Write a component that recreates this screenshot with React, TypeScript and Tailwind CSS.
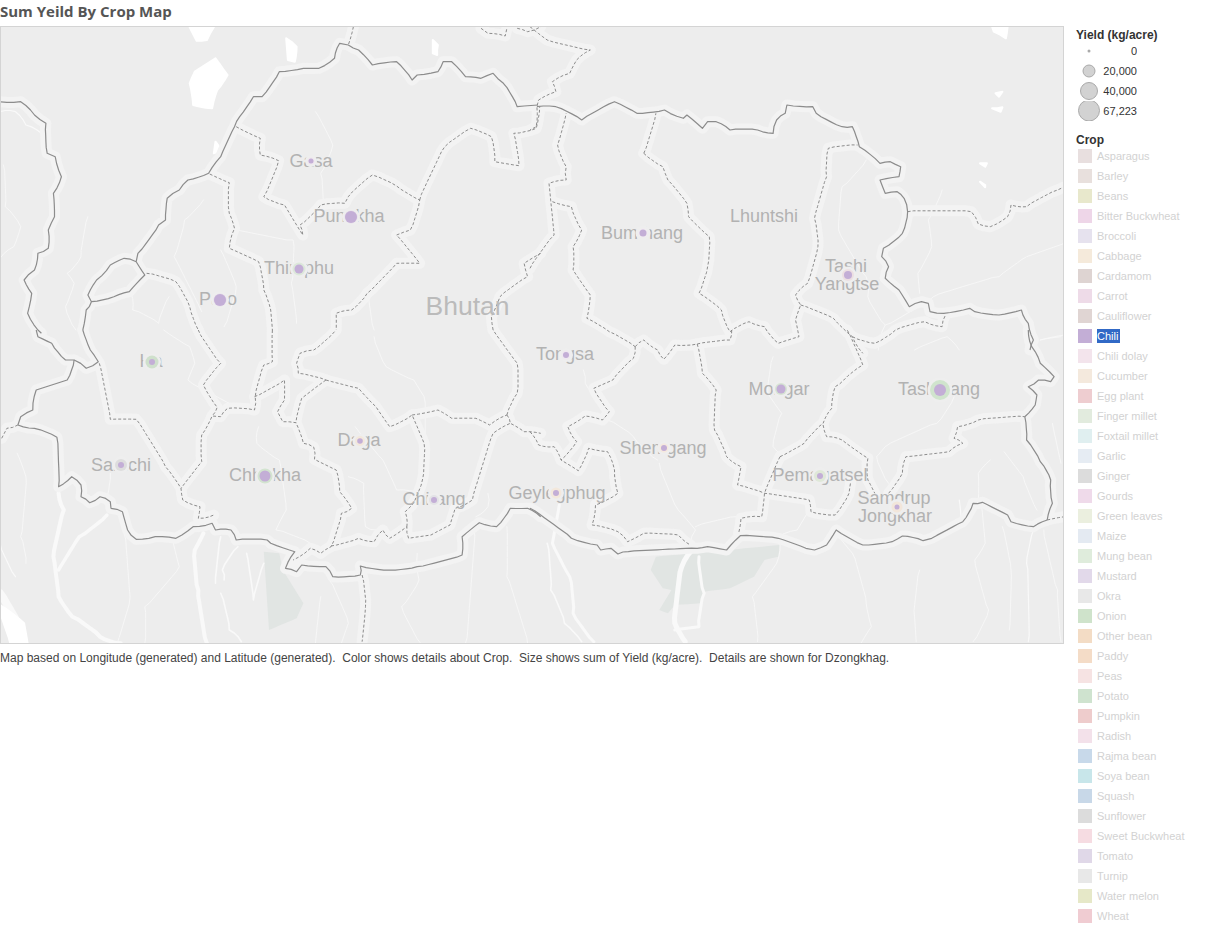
import React from "react";

// traced from crops of the map, each crop has its own origin and scale
type Region = "A" | "B" | "C" | "D";
const origins: Record<Region, [number, number]> = {A: [0, 0], B: [530, 20], C: [0, 330], D: [530, 330]};

// splits long segments and nudges the new points so lines look hand surveyed, not ruler straight
const toPath = ([region, pts]: [Region, string], rough = 0.9) => {
    const [ox, oy] = origins[region];
    const points = pts.trim().split(/\s+/).map((p) => {
        const [x, y] = p.split(",").map(Number);
        return [ox + x / 2.9, oy + y / 3];
    });
    const out: number[][] = [points[0]];
    for (let i = 1; i < points.length; i++) {
        const [ax, ay] = points[i - 1];
        const [bx, by] = points[i];
        const len = Math.hypot(bx - ax, by - ay);
        const steps = Math.max(1, Math.round(len / 6));
        for (let s = 1; s <= steps; s++) {
            const t = s / steps;
            const n = s === steps ? 0 : Math.sin(ax * 12.9 + ay * 78.2 + s * 37.7) * rough;
            out.push([ax + (bx - ax) * t - ((by - ay) / len) * n, ay + (by - ay) * t + ((bx - ax) / len) * n]);
        }
    }
    return "M" + out.map(([x, y]) => `${x.toFixed(1)} ${y.toFixed(1)}`).join("L");
};

const solidBorders: [Region, string][] = [
    ["A", "0,305 60,305 100,345 133,370 137,460 160,470 178,530 155,580 158,650 140,690 140,745 110,760 100,810 70,840 92,880 80,940 110,990 120,1000"],
    ["C", "105,0 110,20 150,40 190,90 215,90 195,150 105,180 95,240 60,260 52,285"],
    ["C", "215,90 250,115 285,95 262,60 240,0"],
    ["A", "240,990 250,930 265,905 330,890 375,875 420,825 395,785 360,775 320,795 280,840 255,885 265,905"],
    ["C", "52,285 100,295 165,322 170,470 208,440 235,465 235,500 260,518 290,500 320,515 322,535 355,545 370,600 395,628 450,620 510,625 560,590 615,580 625,600 670,600 685,630 775,630 785,640 855,665 828,715 860,725 875,705 945,710 965,740 1045,735 1045,708 1130,720 1210,710 1340,675 1340,620 1390,578 1440,590 1480,535 1530,535 1568,560"],
    ["D", "0,535 120,625 195,645 205,660 235,655 255,672 285,665 485,655 515,650 570,660 610,617 720,625 800,655 825,660 860,645 888,600 965,645 1050,635 1080,618 1140,632 1165,625 1255,575 1285,520 1312,517 1385,555 1395,575 1460,590 1500,570"],
    ["D", "1445,0 1455,50 1480,100 1520,140 1510,155 1475,150 1445,170 1470,195 1465,225 1435,260 1440,330 1480,395 1510,450 1515,520 1500,570"],
    ["A", "395,785 400,760 460,675 480,660 485,595 520,570 545,540 605,520 640,470 680,380 695,350 735,290 760,290 810,215 880,205 925,205 970,175 985,130 1010,135 1040,150 1080,195 1150,185 1195,240 1210,225 1270,215 1285,185 1310,185 1350,230 1395,235 1430,220 1460,250 1500,320 1560,315"],
    ["B", "20,260 75,260 150,300 245,245 310,280 390,270 445,295 455,285 500,325 515,305 540,305 580,330 660,330 705,340 715,300 740,280 745,255 820,260 830,280 905,320 935,320 955,380 1015,430 1045,425 1075,440 1070,470 1015,480 1030,520 1065,515 1085,535 1095,575 1080,640 1025,685 1020,710 1040,740 1030,775 1070,810 1100,860 1135,845 1155,850 1160,875 1200,880 1275,865 1290,875 1360,885 1425,870 1445,910 1460,960 1450,990"],
];

const dashedBorders: [Region, string][] = [
    ["B", "1095,575 1280,575 1300,612 1335,620 1385,590 1395,555 1440,560 1530,510 1550,500"],
    ["D", "1500,570 1550,560"],
    ["A", "1025,80 1010,135"],
    ["A", "1395,85 1415,100 1465,108 1470,85"],
    ["A", "1500,85 1530,95 1568,80"],
    ["B", "0,20 50,60 175,90 135,120 115,160 65,185 75,215 25,240 20,260 18,320 0,330"],
    ["C", "5,325 20,295 52,285"],
    ["A", "685,380 755,415 755,465 808,482 765,590 825,615 878,705 870,675 930,615 1000,610 1010,590 1080,525 1150,558 1217,600 1190,690 1150,705 1217,790 1150,790 1065,880 1020,930 975,940 975,990"],
    ["A", "1217,600 1290,440 1365,385 1425,410 1435,485 1505,497 1490,400 1555,385 1565,320"],
    ["A", "608,522 665,548 665,640 680,685 665,745 750,785 765,870 785,930 790,990"],
    ["C", "790,0 790,95 765,105 740,200 738,240 660,235 640,260 615,258 585,315 585,395 525,475"],
    ["C", "738,200 825,150 825,210 805,245 820,275 858,278 880,340 910,352 912,388 975,420 985,485 1020,535 990,550 960,650 930,670 900,655 850,690"],
    ["A", "425,820 510,845 550,920 575,990"],
    ["C", "575,0 640,100 590,165 630,232 615,258"],
    ["C", "288,100 320,268 395,268 480,410 525,475 530,510 580,530 575,565 620,555"],
    ["C", "960,648 1040,625 1085,635 1110,600 1130,625 1180,590 1185,625 1250,615 1305,585 1320,535 1370,510 1430,310 1480,280"],
    ["C", "1180,590 1175,545 1195,525 1225,450 1230,340 1195,255"],
    ["C", "1195,255 1270,240 1310,265 1380,265 1420,285 1470,255"],
    ["C", "970,5 910,60 870,70 860,100 865,130 945,150"],
    ["C", "945,150 875,205 858,278"],
    ["C", "945,150 1040,175 1090,230 1130,290 1195,255"],
    ["C", "1470,255 1500,190 1500,100 1430,0"],
    ["C", "1470,255 1480,280 1520,305 1568,310"],
    ["A", "1430,990 1425,950 1450,890 1530,830 1520,790 1568,760"],
    ["B", "0,745 70,645 55,490 105,480 105,440 80,375 105,280"],
    ["B", "65,545 120,560 150,630 125,680 125,750 175,825 165,895 230,935 305,980"],
    ["B", "330,400 365,280"],
    ["B", "330,400 385,440 400,480 455,550 460,590 520,650 515,740 490,820 555,870 580,935"],
    ["B", "580,935 635,905 680,920 720,970 780,950 770,900 785,855 770,825 805,790 835,680 825,595 860,470 865,385 950,375"],
    ["B", "785,855 880,895 935,950 965,1000"],
    ["B", "935,950 1000,970 1060,930 1145,905 1195,920 1205,885"],
    ["D", "305,50 330,30 370,60 388,88 420,45 485,42 580,30 585,0"],
    ["D", "485,42 500,130 540,180 535,300 570,380 612,410 602,465 680,490 810,510 815,545 885,555 925,490 930,455"],
    ["D", "305,50 300,85 240,150 185,175 230,245 210,270 160,258 110,290 135,335 90,390"],
    ["D", "0,305 25,345 70,350 90,390 140,422 170,355 225,365 245,420 255,490 190,525 180,585 255,605 283,635 330,610 430,615 465,645"],
    ["D", "725,380 680,490 672,560 612,565 605,610"],
    ["D", "725,380 795,340 850,280 875,235 885,170 910,150 965,105 920,0"],
    ["D", "850,285 860,320 905,330 980,385 980,450 1000,490"],
    ["D", "1040,490 1080,430 1090,380 1215,365 1255,340 1230,325 1240,290 1300,270 1435,260"],
    ["C", "1050,735 1060,830 1050,935"],
];

const rivers: [Region, string, number][] = [
    ["A", "915,335 965,435 930,520 935,620", 0.8],
    ["A", "590,600 535,660 505,770 585,935", 0.8],
    ["A", "640,750 685,860 650,980", 0.8],
    ["A", "255,650 235,770 195,820 215,850 190,920 220,990", 0.8],
    ["A", "10,495 15,620 60,680 40,740 0,775", 0.8],
    ["A", "680,685 850,720 845,850 860,970", 0.8],
    ["A", "380,880 385,930 460,970 490,890", 0.8],
    ["A", "1070,880 1085,990", 0.8],
    ["A", "0,335 45,335 75,375 120,400", 1.2],
    ["B", "975,420 905,500 895,630 975,770 980,830 1030,915", 0.8],
    ["B", "1195,510 1155,600 1165,680 1125,760 1130,820", 0.8],
    ["B", "1550,670 1440,710 1360,770 1170,830 1030,915 1010,990", 0.8],
    ["B", "1115,990 1210,950 1245,990", 0.8],
    ["B", "1480,960 1550,945", 0.8],
    ["C", "170,490 185,540 155,680 170,800 210,860 290,920 350,940", 4],
    ["C", "170,720 230,620 310,555", 3.5],
    ["C", "590,610 565,660 575,780 600,940", 4],
    ["C", "0,640 45,740", 1.2],
    ["C", "0,790 50,880 70,940", 8],
    ["C", "640,620 625,760", 1.6],
    ["C", "690,650 645,720 650,750", 1.6],
    ["C", "715,670 735,810 765,700", 1.6],
    ["C", "640,790 665,900 700,935", 1.6],
    ["C", "50,370 75,440 60,620 75,700", 0.8],
    ["C", "360,610 375,820 340,940", 0.8],
    ["C", "500,625 520,710 420,830 420,940", 0.8],
    ["C", "1010,440 1055,460 1060,590 1090,600", 0.8],
    ["C", "1085,20 1120,110 1200,150 1230,200 1230,480", 0.8],
    ["C", "1030,290 1110,390 1150,480 1225,490", 0.8],
    ["C", "750,290 745,340 810,390 830,540 800,600 900,640", 0.8],
    ["C", "475,0 550,50 565,100 545,150 690,230", 0.8],
    ["C", "955,750 1010,880 990,940", 0.8],
    ["C", "930,800 915,940", 0.8],
    ["C", "1375,600 1350,940", 0.8],
    ["C", "1470,590 1470,740 1530,940", 0.8],
    ["C", "1210,670 1215,750 1165,830 1220,940", 0.8],
    ["C", "1415,490 1415,530 1380,560", 0.8],
    ["C", "320,430 310,500", 0.8],
    ["D", "85,525 65,640 115,740 125,850 185,935", 3],
    ["D", "50,640 60,780 100,880 150,935", 1.6],
    ["D", "470,660 440,710 420,880 450,935", 5],
    ["D", "490,680 505,790 490,890 420,900", 3],
    ["D", "725,640 715,700 645,800 660,935", 0.8],
    ["D", "880,600 935,670 975,820 990,890 960,940", 0.8],
    ["D", "1130,720 1115,860 1120,935", 0.8],
    ["D", "1310,530 1320,640 1290,690 1330,840 1285,935", 0.8],
    ["D", "1370,590 1395,720 1390,900", 0.8],
    ["D", "1460,600 1440,700 1445,935", 1.2],
    ["D", "1490,600 1530,780 1540,935", 0.8],
    ["D", "1245,510 1250,560", 1.2],
    ["D", "1335,390 1300,430 1300,510", 0.8],
    ["D", "1375,365 1430,440 1470,540", 0.8],
    ["D", "1515,280 1540,400", 0.8],
    ["D", "1230,200 1180,280 1030,350 1005,380 1040,460", 0.8],
    ["D", "705,80 690,190 730,250 705,350 730,375", 0.8],
    ["D", "375,400 430,540 480,600 465,640", 0.8],
    ["D", "480,590 600,560", 0.8],
    ["D", "225,270 300,320 370,390", 0.8],
    ["D", "155,120 160,160 230,245", 0.8],
    ["D", "810,540 775,600 720,620", 0.8],
    ["D", "1480,30 1540,20", 0.8],
];

const lakes: [Region, string][] = [
    ["A", "550,82 620,82 600,120 570,122"],
    ["A", "625,175 660,225 630,270 615,325 560,315 550,250 565,215"],
    ["A", "830,115 860,140 855,185 835,180"],
    ["A", "1255,120 1270,135 1268,165 1255,160"],
    ["A", "625,425 640,450 620,460"],
    ["B", "1340,20 1385,20 1380,55 1345,35"],
    ["B", "1350,220 1370,215 1360,230"],
    ["B", "1340,265 1370,262 1365,275"],
    ["B", "1305,430 1325,430 1320,440"],
    ["B", "1305,485 1320,495 1320,502"],
    ["C", "0,825 70,880 80,940 30,940 0,850"],
];

const patches: [Region, string][] = [
    ["C", "765,665 810,670 820,720 880,820 860,865 780,900"],
    ["D", "350,720 365,680 725,645 720,680 680,690 650,740 580,775 505,785 495,820 420,825 400,850 375,840 410,780 385,775"],
];

const labels: [string, number, number][] = [
    ["Gasa", 311, 167], ["Punakha", 349, 222], ["Thimphu", 299, 274], ["Paro", 218, 305], ["Ha", 151, 367],
    ["Samchi", 121, 471], ["Chhukha", 265, 481], ["Daga", 359, 446], ["Chirang", 434, 505], ["Geylegphug", 557, 499],
    ["Tongsa", 565, 360], ["Bumthang", 642, 239], ["Lhuntshi", 764, 222], ["Tashi", 846, 272], ["Yangtse", 847, 290],
    ["Mongar", 779, 395], ["Tashigang", 939, 395], ["Shemgang", 663, 454], ["Pemagatsel", 820, 481],
    ["Samdrup", 894, 504], ["Jongkhar", 895, 522],
];

// x, y, dot radius, halo radius, halo colour
const marks: [number, number, number, number, string][] = [
    [311, 161, 2.5, 3.5, "#efe6ee"], [351, 217, 6, 6.5, "#e6dcea"], [299, 269, 4.5, 6.5, "#dce8da"], [220, 300, 6, 6.5, "#e6dcea"],
    [152, 362, 3, 6.5, "#cfe0cc"], [121, 465, 3, 6, "#dddddd"], [265, 476, 5.5, 7.5, "#d3e4d0"], [360, 441, 2.8, 5, "#f3e8dc"],
    [434, 500, 3, 5, "#e3e3e6"], [556, 493, 3, 5.5, "#f3e8dc"], [566, 355, 3, 4.5, "#efe8f0"], [643, 233, 3.5, 5, "#f0ecf0"],
    [848, 275, 4, 6, "#ecdfe2"], [781, 389, 4.5, 6, "#d6e4d3"], [940, 390, 6, 10, "#d0e4cd"], [664, 448, 3, 4.5, "#f5e9de"],
    [820, 476, 3, 6, "#dfe8d8"], [897, 507, 2.5, 5.5, "#f2e6da"],
];

const crops: [string, string][] = [
    ["Asparagus", "bg-[#e8dfdf]"], ["Barley", "bg-[#e8e0dd]"], ["Beans", "bg-[#e8e8cc]"], ["Bitter Buckwheat", "bg-[#eed6e8]"],
    ["Broccoli", "bg-[#e6e2ee]"], ["Cabbage", "bg-[#f5eadb]"], ["Cardamom", "bg-[#ded4d2]"], ["Carrot", "bg-[#eedbe8]"],
    ["Cauliflower", "bg-[#e0d5d3]"], ["Chili", "bg-[#c3aed6]"], ["Chili dolay", "bg-[#f3e4ec]"], ["Cucumber", "bg-[#f4e9dd]"],
    ["Egg plant", "bg-[#eecdd0]"], ["Finger millet", "bg-[#e2ebde]"], ["Foxtail millet", "bg-[#e0eff0]"], ["Garlic", "bg-[#e6ecf3]"],
    ["Ginger", "bg-[#dcdcdc]"], ["Gourds", "bg-[#efdaea]"], ["Green leaves", "bg-[#ebefdf]"], ["Maize", "bg-[#e4eaf2]"],
    ["Mung bean", "bg-[#dfecdc]"], ["Mustard", "bg-[#e2d9ea]"], ["Okra", "bg-[#e8e8e8]"], ["Onion", "bg-[#cfe3cb]"],
    ["Other bean", "bg-[#f3dcc5]"], ["Paddy", "bg-[#f4dcc7]"], ["Peas", "bg-[#f6e3e3]"], ["Potato", "bg-[#cfe3cf]"],
    ["Pumpkin", "bg-[#eecccc]"], ["Radish", "bg-[#f3e1ea]"], ["Rajma bean", "bg-[#c8d9ea]"], ["Soya bean", "bg-[#c8e6ea]"],
    ["Squash", "bg-[#c8d8e8]"], ["Sunflower", "bg-[#dcdcdc]"], ["Sweet Buckwheat", "bg-[#f6dce2]"], ["Tomato", "bg-[#e0d8e8]"],
    ["Turnip", "bg-[#e8e8e8]"], ["Water melon", "bg-[#e6e8c8]"], ["Wheat", "bg-[#f0ccd2]"],
];

const sizes: [string, number][] = [["0", 1.5], ["20,000", 6], ["40,000", 8.5], ["67,223", 10.5]];

const mapFont = "'Liberation Sans', sans-serif";

const BhutanMap = () => (
    <div className="w-[1064px] h-[618px] border border-[#d4d4d4] bg-[#ededed]">
        <svg className="block w-[1062px] h-[616px]" viewBox="1 27 1062 616">
            {patches.map((p, i) => <path key={i} d={toPath(p, 0) + "Z"} fill="#e1e5e3"/>)}
            {rivers.map(([r, pts, w], i) => (
                <path key={i} d={toPath([r, pts], 1.2)} fill="none" stroke="#f9f9f9" strokeWidth={w} strokeLinejoin="round" strokeLinecap="round"/>
            ))}
            {lakes.map((p, i) => <path key={i} d={toPath(p, 0.5) + "Z"} fill="#ffffff" stroke="#ffffff" strokeWidth={2} strokeLinejoin="round"/>)}
            {[...solidBorders, ...dashedBorders].map((p, i) => (
                <path key={i} d={toPath(p)} fill="none" stroke="#f3f3f3" strokeWidth={11} strokeLinejoin="round" strokeLinecap="round"/>
            ))}
            {dashedBorders.map((p, i) => (
                <path key={i} d={toPath(p)} fill="none" stroke="#808080" strokeWidth={0.9} strokeDasharray="3 2"/>
            ))}
            {solidBorders.map((p, i) => (
                <path key={i} d={toPath(p)} fill="none" stroke="#8c8c8c" strokeWidth={1.2} strokeLinejoin="round"/>
            ))}
            <text x={467.5} y={315} textAnchor="middle" fontSize={26.5} fill="#bbbbbb" fontFamily={mapFont}>Bhutan</text>
            {labels.map(([name, x, y]) => (
                <text key={name} x={x} y={y} textAnchor="middle" fontSize={18} fill="#b2b2b2" fontFamily={mapFont}>{name}</text>
            ))}
            {marks.map(([x, y, r, halo, color], i) => (
                <g key={i}>
                    <circle cx={x} cy={y} r={halo + 2.5} fill="#eeeeee"/>
                    <circle cx={x} cy={y} r={halo} fill={color}/>
                    <circle cx={x} cy={y} r={r} fill="#c3aed6"/>
                </g>
            ))}
        </svg>
    </div>
);

export default function App() {
    return (
        <div className="flex w-[1215px] h-[926px] bg-white overflow-hidden font-['Liberation_Sans',sans-serif]">
            <div className="w-[1064px] shrink-0">
                <h1 className="h-[26px] leading-[22px] text-[15px] font-bold text-[#555555] font-['Open_Sans',sans-serif]">Sum Yeild By Crop Map</h1>
                <BhutanMap/>
                <p className="mt-[6px] text-[12px] leading-[16px] text-[#444444] whitespace-pre">Map based on Longitude (generated) and Latitude (generated).  Color shows details about Crop.  Size shows sum of Yield (kg/acre).  Details are shown for Dzongkhag.</p>
            </div>
            <div className="ml-[12px] pt-[28px] w-[139px]">
                <h2 className="h-[15px] leading-[15px] text-[12px] font-bold text-[#333333]">Yield (kg/acre)</h2>
                {sizes.map(([value, r], i) => (
                    <div key={value} className={`relative flex items-center justify-end w-[61px] text-[11px] text-[#333333] h-[20px] overflow-hidden ${i === 0 ? "mt-[-2px]" : ""}`}>
                        <svg className="absolute left-[1px] top-0" width="24" height="20" viewBox="0 0 24 20">
                            <circle cx="12" cy={i === 3 ? 9.5 : 10} r={r} fill={i === 0 ? "#aaaaaa" : "#d2d2d2"} stroke="#aaaaaa" strokeWidth={i === 0 ? 0 : 1}/>
                        </svg>
                        {value}
                    </div>
                ))}
                <h2 className="mt-[12px] h-[13px] leading-[15px] text-[12px] font-bold text-[#333333]">Crop</h2>
                {crops.map(([name, swatch]) => (
                    <div key={name} className="flex items-center h-[20px] pl-[2px] text-[11px] text-[#d2d2d2]">
                        <span className={`w-[14px] h-[14px] shrink-0 ${swatch}`}/>
                        {name === "Chili"
                            ? <span className="ml-[5px] pr-[2px] bg-[#3169c6] text-white h-[14px] leading-[14px]">{name}</span>
                            : <span className="ml-[5px]">{name}</span>}
                    </div>
                ))}
            </div>
        </div>
    );
}
